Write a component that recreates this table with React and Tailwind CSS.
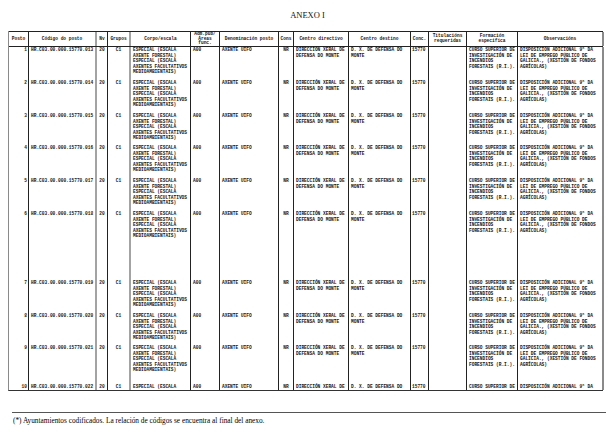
const cols = [
  { w: 'w-[20px]', b: 'border-r border-r-[#222]', a: 'text-right pr-[1px]' },
  { w: 'w-[68px]', b: 'border-r-2 border-r-[#a3a3a3]', a: 'pl-[2px]' },
  { w: 'w-[11px]', b: 'border-r border-r-[#222]', a: 'text-center' },
  { w: 'w-[23px]', b: 'border-r-2 border-r-[#a3a3a3]', a: 'text-center' },
  { w: 'w-[60px]', b: 'border-r border-r-[#222]', a: 'pl-[2px]' },
  { w: 'w-[29px]', b: 'border-r border-r-[#222]', a: 'pl-[2px]' },
  { w: 'w-[59px]', b: 'border-r border-r-[#222]', a: 'pl-[2px]' },
  { w: 'w-[15px]', b: 'border-r border-r-[#222]', a: 'text-center' },
  { w: 'w-[55px]', b: 'border-r border-r-[#222]', a: 'pl-[2px]' },
  { w: 'w-[62px]', b: 'border-r border-r-[#222]', a: 'pl-[2px]' },
  { w: 'w-[18px]', b: 'border-r border-r-[#222]', a: 'pl-[1px]' },
  { w: 'w-[38px]', b: 'border-r border-r-[#222]', a: 'pl-[2px]' },
  { w: 'w-[51px]', b: 'border-r border-r-[#222]', a: 'pl-[2px]' },
  { w: 'w-[86px]', b: 'border-r-2 border-r-[#8a8a8a]', a: 'pl-[2px]' },
];

const headers = [
  ['Posto'],
  ['Código do posto'],
  ['Nv'],
  ['Grupos'],
  ['Corpo/escala'],
  ['Adm.pub/', 'Áreas', 'func.'],
  ['Denominación posto'],
  ['Cons'],
  ['Centro directivo'],
  ['Centro destino'],
  ['Conc.'],
  ['Titulacións', 'requeridas'],
  ['Formación', 'específica'],
  ['Observacións'],
];

// the last row runs on to the next page, only its first line shows
const rowHeights = [
  'h-[33px]', 'h-[33px]', 'h-[32px]', 'h-[33px]', 'h-[33px]',
  'h-[69px]', 'h-[33px]', 'h-[32px]', 'h-[39px]', 'h-[5.5px]',
];

const corpo = [
  'ESPECIAL (ESCALA',
  'AXENTE FORESTAL)',
  'ESPECIAL (ESCALA',
  'AXENTES FACULTATIVOS',
  'MEDIOAMBIENTAIS)',
];

function rowData(n) {
  return [
    [String(n)],
    [`HR.C03.00.000.15770.0${n + 12}`],
    ['20'],
    ['C1'],
    corpo,
    ['A00'],
    ['AXENTE UIFO'],
    ['NR'],
    ['DIRECCIÓN XERAL DE', 'DEFENSA DO MONTE'],
    ['D. X. DE DEFENSA DO', 'MONTE'],
    ['15770'],
    [],
    ['CURSO SUPERIOR DE', 'INVESTIGACIÓN DE', 'INCENDIOS', 'FORESTAIS (R.I.).'],
    ['DISPOSICIÓN ADICIONAL 9ª DA', 'LEI DE EMPREGO PÚBLICO DE', 'GALICIA., (XESTIÓN DE FONDOS', 'AGRÍCOLAS)'],
  ];
}

function Header() {
  return (
    <div className="flex h-[16px] border-t border-t-[#222] border-b-[1.5px] border-b-[#222]">
      {headers.map((lines, i) => (
        <div
          key={i}
          className={`${cols[i].w} ${cols[i].b} shrink-0 flex flex-col items-center justify-center text-center leading-[4.6px]`}
        >
          {lines.map((l, j) => (
            <span key={j}>{l}</span>
          ))}
        </div>
      ))}
    </div>
  );
}

function Row({ n, h, cut }) {
  const data = rowData(n);
  return (
    <div className={`flex ${h}`}>
      {data.map((lines, i) => (
        <div key={i} className={`${cols[i].w} ${cols[i].b} ${cols[i].a} shrink-0 leading-[5.5px] whitespace-nowrap`}>
          {(cut ? lines.slice(0, 1) : lines).map((l, j) => (
            <div key={j}>{l}</div>
          ))}
        </div>
      ))}
    </div>
  );
}

export default function App() {
  return (
    <div className="w-[615px] h-[440px] bg-white text-[#141414] overflow-hidden pt-[10px]">
      <h1 className="text-center font-['Liberation_Serif',serif] text-[8.5px] leading-[10px]">ANEXO I</h1>
      <div className="ml-[8px] mt-[11px] w-[595px] border-l border-l-[#8a8a8a] border-b border-b-[#333] font-['Liberation_Mono',monospace] font-bold text-[4.5px]">
        <Header />
        {rowHeights.map((h, i) => (
          <Row key={i} n={i + 1} h={h} cut={i === rowHeights.length - 1} />
        ))}
      </div>
      <div className="ml-[12px] mt-[21px] w-[594px] h-[1.5px] bg-[#555]" />
      <p className="ml-[13px] mt-[3px] font-['Liberation_Serif',serif] text-[7.3px] leading-[9px] text-black">
        (*) Ayuntamientos codificados. La relación de códigos se encuentra al final del anexo.
      </p>
    </div>
  );
}
